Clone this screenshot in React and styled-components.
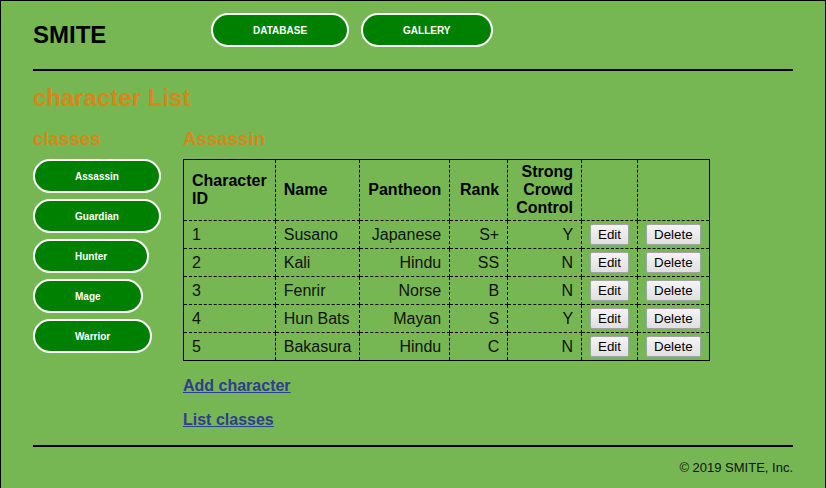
import React from 'react';
import styled, { createGlobalStyle } from 'styled-components';

const GlobalStyle = createGlobalStyle`
  html, body {
    margin: 0;
    padding: 0;
    background: #77b753;
  }
  body {
    font-family: "Liberation Sans", Arial, sans-serif;
    color: #000;
    overflow: hidden;
  }
`;

const Page = styled.div`
  box-sizing: border-box;
  min-height: 100vh;
  border: 1px solid #000;
  border-bottom: none;
  padding: 0 32px;
  background: #77b753;
`;

const Header = styled.header`
  display: flex;
  align-items: flex-start;
  padding-top: 12px;
`;

const Logo = styled.div`
  width: 178px;
  margin-top: 8px;
  font-size: 24px;
  line-height: 27.6px;
  font-weight: bold;
`;

const Nav = styled.nav`
  display: flex;
  gap: 12px;
`;

const Pill = styled.a`
  box-sizing: border-box;
  display: flex;
  align-items: center;
  justify-content: center;
  height: 34px;
  padding: 0 40px;
  border: 2px solid #fff;
  border-radius: 17px;
  background: #008000;
  color: #fff;
  font-size: 10px;
  font-weight: bold;
  text-decoration: none;
  cursor: pointer;
`;

const Rule = styled.hr`
  margin: ${(p) => p.$top}px 0 0;
  border: none;
  height: 2px;
  background: #000;
`;

const Title = styled.h2`
  margin: 13px 0 0;
  font-size: 24px;
  line-height: 27.6px;
  color: #d6871a;
`;

const Columns = styled.div`
  display: grid;
  grid-template-columns: 150px 1fr;
  margin-top: 17px;
`;

const Section = styled.h3`
  margin: 0 0 9px;
  font-size: 18.72px;
  line-height: 22px;
  color: #d6871a;
`;

const ClassList = styled.div`
  display: flex;
  flex-direction: column;
  align-items: flex-start;
  gap: 6px;
`;

const Main = styled.div`
  display: flex;
  flex-direction: column;
  align-items: flex-start;
`;

const Table = styled.table`
  width: 1px;
  border-collapse: collapse;
  border: 1px solid #000;
  font-size: 16px;
`;

const Th = styled.th`
  min-width: ${(p) => (p.$width ? `${p.$width}px` : '0')};
  padding: 3px 8px;
  border: 1px dashed #000;
  line-height: 18px;
  text-align: ${(p) => p.$align || 'right'};
`;

const Td = styled.td`
  padding: 3px 8px;
  border: 1px dashed #000;
  line-height: 18px;
  white-space: nowrap;
  color: #111;
  text-align: ${(p) => p.$align || 'right'};
`;

const ActionButton = styled.button`
  box-sizing: border-box;
  height: 21px;
  padding: 0 7px;
  border: 1px solid #a3a3a3;
  border-radius: 2px;
  background: linear-gradient(#f4f4f4, #e0e0e0);
  font-family: "Liberation Sans", Arial, sans-serif;
  font-size: 13.33px;
  color: #000;
  cursor: pointer;
`;

const Links = styled.div`
  display: flex;
  flex-direction: column;
  gap: 15px;
  margin-top: 16px;
`;

const Link = styled.a`
  font-size: 16px;
  line-height: 18.4px;
  font-weight: bold;
  color: #2f3e8e;
  text-decoration: underline;
  cursor: pointer;
`;

const Footer = styled.footer`
  margin-top: 13px;
  text-align: right;
  font-size: 13px;
  line-height: 15px;
  color: #111;
`;

const classes = ['Assassin', 'Guardian', 'Hunter', 'Mage', 'Warrior'];

const characters = [
  { id: 1, name: 'Susano', pantheon: 'Japanese', rank: 'S+', cc: 'Y' },
  { id: 2, name: 'Kali', pantheon: 'Hindu', rank: 'SS', cc: 'N' },
  { id: 3, name: 'Fenrir', pantheon: 'Norse', rank: 'B', cc: 'N' },
  { id: 4, name: 'Hun Bats', pantheon: 'Mayan', rank: 'S', cc: 'Y' },
  { id: 5, name: 'Bakasura', pantheon: 'Hindu', rank: 'C', cc: 'N' },
];

const App = () => {
  return (
    <Page>
      <GlobalStyle />
      <Header>
        <Logo>SMITE</Logo>
        <Nav>
          <Pill>DATABASE</Pill>
          <Pill>GALLERY</Pill>
        </Nav>
      </Header>
      <Rule $top={20} />
      <Title>character List</Title>
      <Columns>
        <div>
          <Section>classes</Section>
          <ClassList>
            {classes.map((c) => (
              <Pill key={c}>{c}</Pill>
            ))}
          </ClassList>
        </div>
        <Main>
          <Section>Assassin</Section>
          <Table>
            <thead>
              <tr>
                <Th $align="left">Character ID</Th>
                <Th $align="left">Name</Th>
                <Th>Pantheon</Th>
                <Th $width={41}>Rank</Th>
                <Th>Strong Crowd Control</Th>
                <Th />
                <Th />
              </tr>
            </thead>
            <tbody>
              {characters.map((ch) => (
                <tr key={ch.id}>
                  <Td $align="left">{ch.id}</Td>
                  <Td $align="left">{ch.name}</Td>
                  <Td>{ch.pantheon}</Td>
                  <Td>{ch.rank}</Td>
                  <Td>{ch.cc}</Td>
                  <Td $align="center">
                    <ActionButton>Edit</ActionButton>
                  </Td>
                  <Td $align="center">
                    <ActionButton>Delete</ActionButton>
                  </Td>
                </tr>
              ))}
            </tbody>
          </Table>
          <Links>
            <Link>Add character</Link>
            <Link>List classes</Link>
          </Links>
        </Main>
      </Columns>
      <Rule $top={16} />
      <Footer>© 2019 SMITE, Inc.</Footer>
    </Page>
  );
};

export default App;
